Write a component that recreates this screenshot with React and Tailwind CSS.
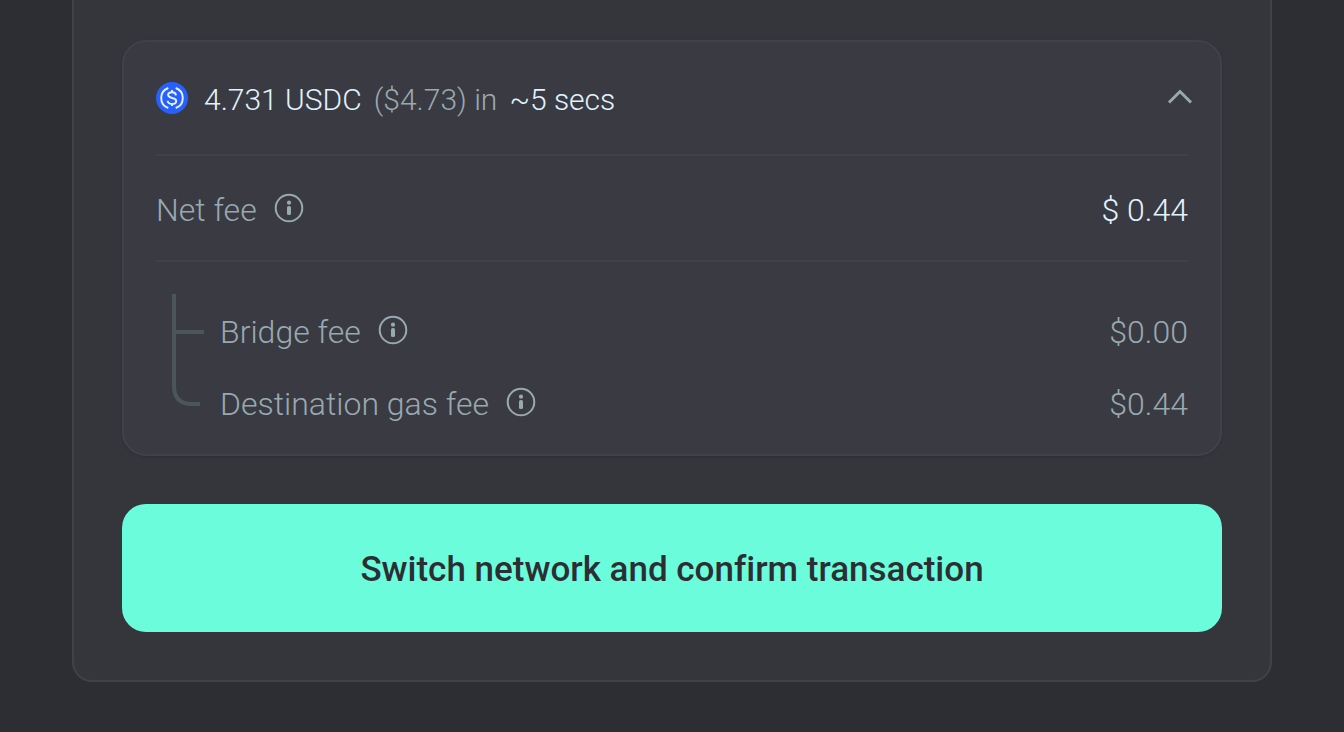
import React from 'react';

const fees = [
  { key: 'bridge', label: 'Bridge fee', amount: '$0.00' },
  { key: 'gas', label: 'Destination gas fee', amount: '$0.44' },
];

const UsdcIcon = () => (
  <svg className="w-8 h-8 flex-shrink-0" viewBox="0 0 32 32" fill="none" aria-hidden="true">
    <circle cx="16" cy="16" r="16" fill="#2860fb" />
    <g stroke="#e4f3ff" strokeWidth="1.900">
      <path d="M12.300 6a10.600 10.600 0 0 0 0 20" />
      <path d="M19.700 6a10.600 10.600 0 0 1 0 20" />
      <path d="M20 13.300c-.2-1.900-1.700-3-4-3-2.300 0-3.900 1.100-3.900 2.800 0 4 8.100 1.800 8.100 5.800 0 1.900-1.700 3-4.200 3s-4.200-1.200-4.300-3.200" />
      <path d="M16 8v2.300M16 21.800V24" />
    </g>
  </svg>
);

const InfoButton = ({ label }) => (
  <button type="button" aria-label={`About ${label}`} className="text-[#98a9b0] cursor-pointer">
    <svg className="w-8 h-8" viewBox="0 0 32 32" fill="none" aria-hidden="true">
      <circle cx="16" cy="16" r="13.3" stroke="currentColor" strokeWidth="2" />
      <circle cx="16" cy="10.700" r="2.100" fill="currentColor" />
      <rect x="14" y="14" width="4" height="9" rx="1.600" fill="currentColor" />
    </svg>
  </button>
);

const FeeTree = () => (
  <svg className="w-8 h-28 flex-shrink-0" viewBox="0 0 32 112" fill="none" stroke="#4b565c" strokeWidth="4" aria-hidden="true">
    <path d="M2 0v92c0 12 6 18 18 18h8" />
    <path d="M4 38h28" />
  </svg>
);

const App = () => {
  return (
    <div className="min-h-screen bg-[#2d2e33] px-[72px] font-['Roboto',sans-serif] font-light text-[32px] leading-11 text-[#98a9b0]">
      <main className="bg-[#35363b] border-2 border-t-0 border-[#414247] rounded-b-[20px] px-12 pt-10 pb-12">
        {/* Quote details */}
        <section className="bg-[#3a3a43] border-2 border-[#414247] rounded-3xl px-8 shadow-sm">
          <div className="flex items-center justify-between py-8 border-b-2 border-[#414249]">
            <div className="flex items-center gap-4">
              <UsdcIcon />
              <p className="flex gap-3 pt-1 text-[30px]">
                <span className="text-[#e0f3ff]">4.731 USDC</span>
                <span>($4.73) in</span>
                <span className="text-[#e0f3ff]">~5 secs</span>
              </p>
            </div>
            <button type="button" aria-label="Hide fees" aria-expanded="true" className="-mr-2 cursor-pointer">
              <svg className="w-8 h-8" viewBox="0 0 32 32" fill="none" stroke="#98a9b0" strokeWidth="3" aria-hidden="true">
                <path d="M5 20.500 16 9.500l11 11" />
              </svg>
            </button>
          </div>

          {/* Net fee */}
          <div className="flex items-center justify-between py-7 border-b-2 border-[#414249]">
            <div className="flex items-center gap-4">
              <span className="pt-1">Net fee</span>
              <InfoButton label="net fee" />
            </div>
            <span className="pt-1 text-[#e0f3ff]">$ 0.44</span>
          </div>

          {/* Fee breakdown */}
          <div className="flex gap-4 pl-4 pt-8 pb-7">
            <FeeTree />
            <ul className="flex-1 flex flex-col gap-6 pt-3">
              {fees.map((fee) => (
                <li key={fee.key} className="flex items-center justify-between">
                  <div className="flex items-center gap-4">
                    <span className="pt-1">{fee.label}</span>
                    <InfoButton label={fee.label} />
                  </div>
                  <span className="pt-1">{fee.amount}</span>
                </li>
              ))}
            </ul>
          </div>
        </section>

        <button
          type="button"
          className="mt-12 w-full rounded-3xl bg-[#6bfcdc] pt-11 pb-10 text-[35px] leading-11 font-medium [font-variant-ligatures:none] text-[#2d2e33] cursor-pointer"
        >
          Switch network and confirm transaction
        </button>
      </main>
    </div>
  );
};

export default App;
